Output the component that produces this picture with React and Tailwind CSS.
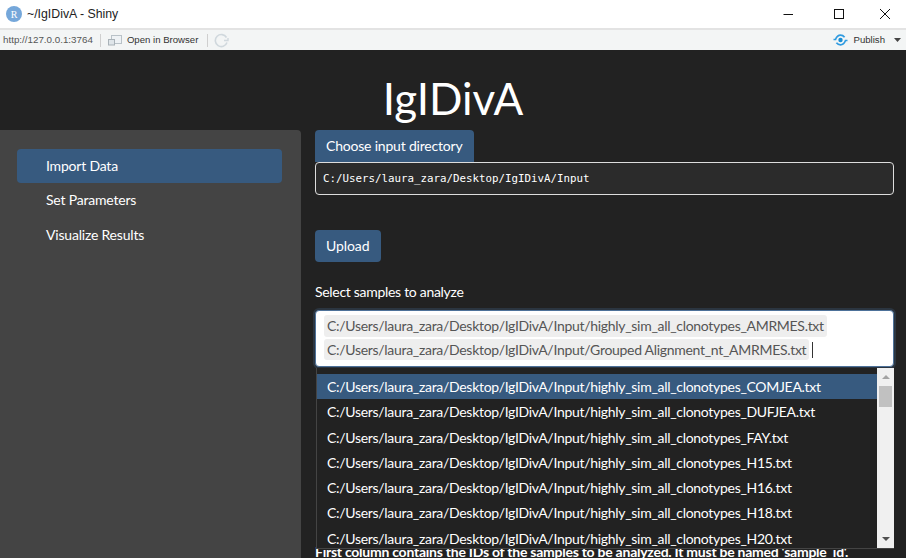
import React from "react";

const base = "C:/Users/laura_zara/Desktop/IgIDivA/Input/";
const options = [
  "highly_sim_all_clonotypes_COMJEA.txt",
  "highly_sim_all_clonotypes_DUFJEA.txt",
  "highly_sim_all_clonotypes_FAY.txt",
  "highly_sim_all_clonotypes_H15.txt",
  "highly_sim_all_clonotypes_H16.txt",
  "highly_sim_all_clonotypes_H18.txt",
  "highly_sim_all_clonotypes_H20.txt",
];

function RLogo() {
  return (
    <svg width="16" height="16" viewBox="0 0 16 16">
      <circle cx="8" cy="8" r="8" fill="#75a7da" />
      <text x="8" y="11.5" textAnchor="middle" fontSize="10" fill="#fff" fontFamily="Liberation Serif, serif">R</text>
    </svg>
  );
}

function PublishIcon() {
  return (
    <svg width="15" height="12" viewBox="0 0 15 12" fill="none">
      <circle cx="7.5" cy="6" r="2.2" fill="#1a8fd6" />
      <path d="M0.5 5.5H2.5C3.5 3 5 1.2 7.5 1.2C9.5 1.2 10.6 2 11.6 3.2" stroke="#2f9be0" strokeWidth="1.7" />
      <path d="M14.5 6.5H12.5C11.5 9 10 10.8 7.5 10.8C5.5 10.8 4.4 10 3.4 8.8" stroke="#2f9be0" strokeWidth="1.7" />
    </svg>
  );
}

export default function App() {
  return (
    <div className="flex h-[558px] w-[906px] flex-col overflow-hidden bg-[#222222] font-['Lato',sans-serif] text-white">
      <div className="flex h-[28px] shrink-0 items-center bg-white text-[#222]">
        <div className="ml-[6px]"><RLogo /></div>
        <span className="ml-[5px] font-['Liberation_Sans',sans-serif] text-[12.3px]">~/IgIDivA - Shiny</span>
        <div className="ml-auto flex items-center">
          <svg width="12" height="12" viewBox="0 0 12 12" className="mr-[39px]"><path d="M1.5 6.5H11" stroke="#111" strokeWidth="1" /></svg>
          <svg width="12" height="12" viewBox="0 0 12 12" className="mr-[34px]"><rect x="1.5" y="1.5" width="9" height="9" fill="none" stroke="#111" strokeWidth="1" /></svg>
          <svg width="12" height="12" viewBox="0 0 12 12" className="mr-[15px]"><path d="M1 1L11 11M11 1L1 11" stroke="#111" strokeWidth="1" /></svg>
        </div>
      </div>
      <div className="flex h-[22px] shrink-0 items-center border-t-2 border-[#e3e3e3] bg-[#f3f5f5] font-['Liberation_Sans',sans-serif] text-[9.6px] text-[#333]">
        <span className="ml-[3px] text-[9.8px] text-[#555]">http://127.0.0.1:3764</span>
        <div className="ml-[7px] h-[13px] w-px bg-[#cfcfcf]" />
        <svg width="14" height="11" viewBox="0 0 14 11" className="ml-[7px]" fill="none">
          <rect x="3.5" y="0.5" width="10" height="8" fill="#eef2f5" stroke="#b9c2c8" />
          <rect x="0.5" y="4.5" width="6" height="5.5" fill="#dfe5e9" stroke="#a9b2b8" />
        </svg>
        <span className="ml-[5px]">Open in Browser</span>
        <div className="ml-[9px] h-[13px] w-px bg-[#cfcfcf]" />
        <svg width="15" height="15" viewBox="0 0 15 15" className="ml-[6px]" fill="none">
          <path d="M12.5 4.5A6 6 0 1 0 13 9.5" stroke="#d0d8dd" strokeWidth="1.6" />
          <path d="M10 7.5H14V5" stroke="#d0d8dd" strokeWidth="1.4" />
        </svg>
        <div className="ml-auto flex items-center">
          <PublishIcon />
          <span className="ml-[6px]">Publish</span>
          <svg width="7" height="4" viewBox="0 0 7 4" className="ml-[9px] mr-[5px]"><path d="M0 0H7L3.5 4Z" fill="#444" /></svg>
        </div>
      </div>
      <div className="flex h-[80px] shrink-0 items-center justify-center pt-[16px] text-[44px] leading-none text-white">
        IgIDivA
      </div>
      <div className="flex min-h-0 flex-1">
        <aside className="flex w-[301px] shrink-0 flex-col rounded-tr-[4px] bg-[#444444] pl-[17px] pr-[19px] pt-[19px] text-[14px] tracking-[-0.2px]">
          <div className="flex h-[34px] items-center rounded-[4px] bg-[#375a7f] pb-[2px] pl-[29px]">Import Data</div>
          <div className="flex h-[34px] items-center pb-[2px] pl-[29px]">Set Parameters</div>
          <div className="mt-px flex h-[34px] items-center pb-[2px] pl-[29px]">Visualize Results</div>
        </aside>
        <main className="relative ml-[14px] w-[579px] shrink-0">
          <button className="flex h-[32px] items-center rounded-t-[4px] bg-[#375a7f] pb-[2px] pl-[11px] pr-[12px] text-[14px] tracking-[-0.2px]">Choose input directory</button>
          <div className="flex h-[33px] items-center rounded-[4px] border border-[#dddddd] bg-[#2b2b2b] pl-[7px] pt-[1px] font-['DejaVu_Sans_Mono',monospace] text-[10.8px]">
            C:/Users/laura_zara/Desktop/IgIDivA/Input
          </div>
          <button className="mt-[35px] flex h-[32px] items-center rounded-[4px] bg-[#375a7f] pb-[2px] pl-[11px] pr-[12px] text-[14px] tracking-[-0.1px]">Upload</button>
          <div className="mt-[21px] h-[18px] text-[14px] leading-[18px] tracking-[-0.3px]">Select samples to analyze</div>
          <div className="mt-[9px] h-[57px] rounded-[4px] border border-[#4d7199] bg-white pl-[8px] pt-[3px] text-[14px] tracking-[-0.3px] text-[#555] shadow-[0_0_0_2px_#2b3540]">
            <div className="flex h-[23px] items-center">
              <span className="flex h-[22px] items-center rounded-[3px] bg-[#eeeeee] px-[3px]">{base}highly_sim_all_clonotypes_AMRMES.txt</span>
            </div>
            <div className="mt-px flex h-[23px] items-center">
              <span className="flex h-[21px] items-center rounded-[3px] bg-[#eeeeee] px-[3px]">{base}Grouped Alignment_nt_AMRMES.txt</span>
              <span className="ml-[3px] h-[16px] w-px bg-[#333]" />
            </div>
          </div>
          <div className="whitespace-nowrap pt-[176px] text-[14px] font-bold leading-[18px] tracking-[-0.25px]">
            First column contains the IDs of the samples to be analyzed. It must be named 'sample_id'.
          </div>
          <div className="absolute left-px top-[238px] flex h-[181px] w-[578px] overflow-hidden border-b border-l border-[#444] bg-[#222222] text-[14px] tracking-[-0.3px]">
            <div className="flex-1 overflow-hidden pt-[5.8px]">
              {options.map((o, i) => (
                <div key={o} className={`flex h-[25.3px] items-center pl-[10px] ${i === 0 ? "bg-[#375a7f]" : ""}`}>
                  {base}{o}
                </div>
              ))}
            </div>
            <div className="flex w-[17px] flex-col items-center bg-[#f0f0f0]">
              <svg width="8" height="4" viewBox="0 0 8 4" className="mt-[7px]"><path d="M4 0L8 4H0Z" fill="#a3a3a3" /></svg>
              <div className="mt-[7px] h-[21px] w-[13px] bg-[#c1c1c1]" />
              <svg width="8" height="4" viewBox="0 0 8 4" className="mb-[7px] mt-auto"><path d="M0 0H8L4 4Z" fill="#505050" /></svg>
            </div>
          </div>
        </main>
      </div>
    </div>
  );
}
